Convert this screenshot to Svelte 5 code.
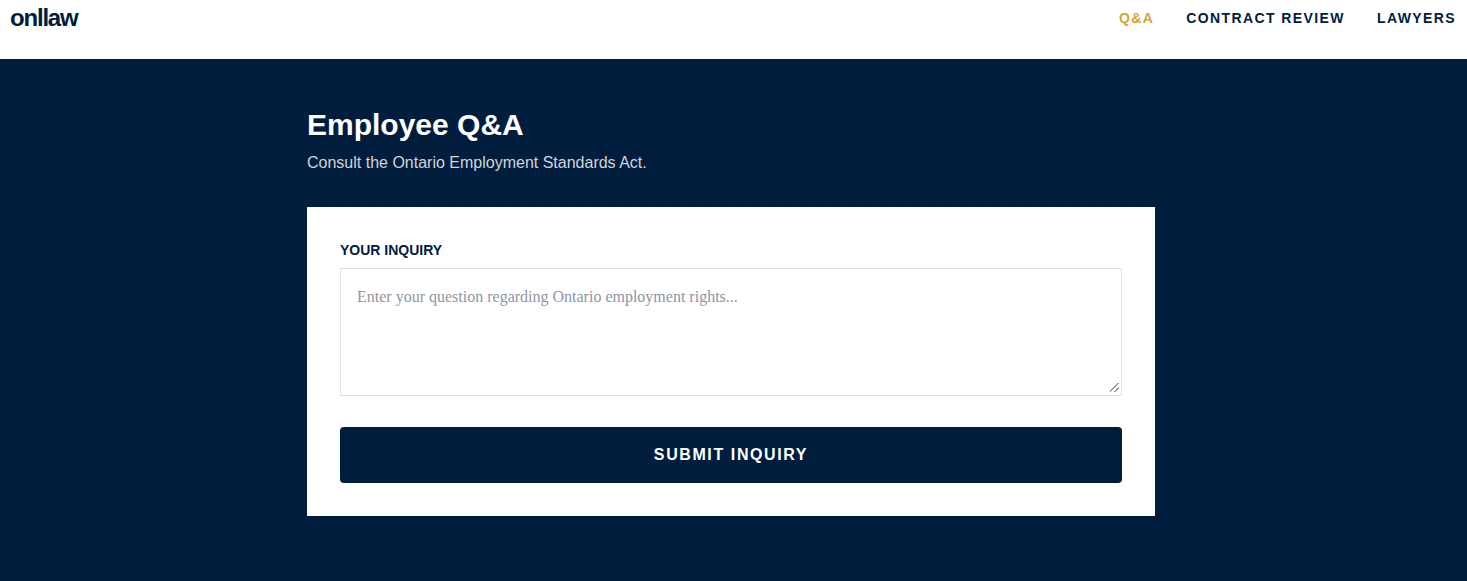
<script lang="ts">
  let inquiry = $state("");
  const links = [
    { label: "Q&A", active: true },
    { label: "CONTRACT REVIEW", active: false },
    { label: "LAWYERS", active: false },
  ];
</script>

<header class="topbar">
  <a class="logo" href="#top">onllaw</a>
  <nav class="links">
    {#each links as link}
      <a href="#top" class:active={link.active}>{link.label}</a>
    {/each}
  </nav>
</header>

<main class="page">
  <div class="column">
    <h1>Employee Q&amp;A</h1>
    <p class="sub">Consult the Ontario Employment Standards Act.</p>

    <form class="card" onsubmit={(e) => e.preventDefault()}>
      <label for="inquiry">YOUR INQUIRY</label>
      <textarea
        id="inquiry"
        bind:value={inquiry}
        placeholder="Enter your question regarding Ontario employment rights..."
      ></textarea>
      <button type="submit">SUBMIT INQUIRY</button>
    </form>
  </div>
</main>

<style>
  :global(body) {
    margin: 0;
    background: #001d3e;
    font-family: "Liberation Sans", Arial, sans-serif;
  }

  .topbar {
    height: 59px;
    box-sizing: border-box;
    background: #fff;
    display: flex;
    justify-content: space-between;
    align-items: flex-start;
    padding: 6px 11px 0 10px;
  }

  .logo {
    color: #001d3e;
    font-size: 24px;
    line-height: 24px;
    font-weight: 700;
    letter-spacing: -1.2px;
    text-decoration: none;
  }

  .links {
    display: flex;
    gap: 32px;
    padding-top: 4px;
  }

  .links a {
    color: #001d3e;
    font-size: 14px;
    line-height: 16px;
    font-weight: 700;
    letter-spacing: 1.4px;
    text-decoration: none;
  }

  .links a.active {
    color: #d4a537;
  }

  .page {
    height: 522px;
    background: #001d3e;
    display: flex;
    justify-content: center;
    overflow: hidden;
  }

  .column {
    width: 848px;
    padding-top: 48px;
    margin-right: 5px;
  }

  h1 {
    margin: 0;
    color: #fff;
    font-size: 30px;
    line-height: 36px;
    font-weight: 700;
  }

  .sub {
    margin: 8px 0 0;
    color: #d1d5db;
    font-size: 16px;
    line-height: 24px;
  }

  .card {
    margin-top: 32px;
    height: 309px;
    box-sizing: border-box;
    background: #fff;
    padding: 33px;
    display: flex;
    flex-direction: column;
  }

  label {
    color: #001d3e;
    font-size: 14px;
    line-height: 20px;
    font-weight: 700;
  }

  textarea {
    display: block;
    margin-top: 8px;
    height: 128px;
    box-sizing: border-box;
    padding: 16px;
    background: #fff;
    border: 1px solid #e0e2e7;
    border-radius: 0;
    outline: none;
    color: #001d3e;
    font-family: "Liberation Serif", "Times New Roman", serif;
    font-size: 16px;
    line-height: 24px;
  }

  textarea::placeholder {
    color: #8f95a3;
    opacity: 1;
  }

  textarea::-webkit-resizer {
    background: linear-gradient(
      135deg,
      transparent 0 44%,
      #999 44% 54%,
      transparent 54% 68%,
      #999 68% 78%,
      transparent 78%
    ) 4px 3px / 9px 9px no-repeat;
  }

  button {
    margin-top: 31px;
    height: 56px;
    background: #001d3e;
    color: #fff;
    border: none;
    border-radius: 4px;
    font-family: inherit;
    font-size: 16px;
    font-weight: 700;
    letter-spacing: 1.6px;
    cursor: pointer;
  }
</style>
